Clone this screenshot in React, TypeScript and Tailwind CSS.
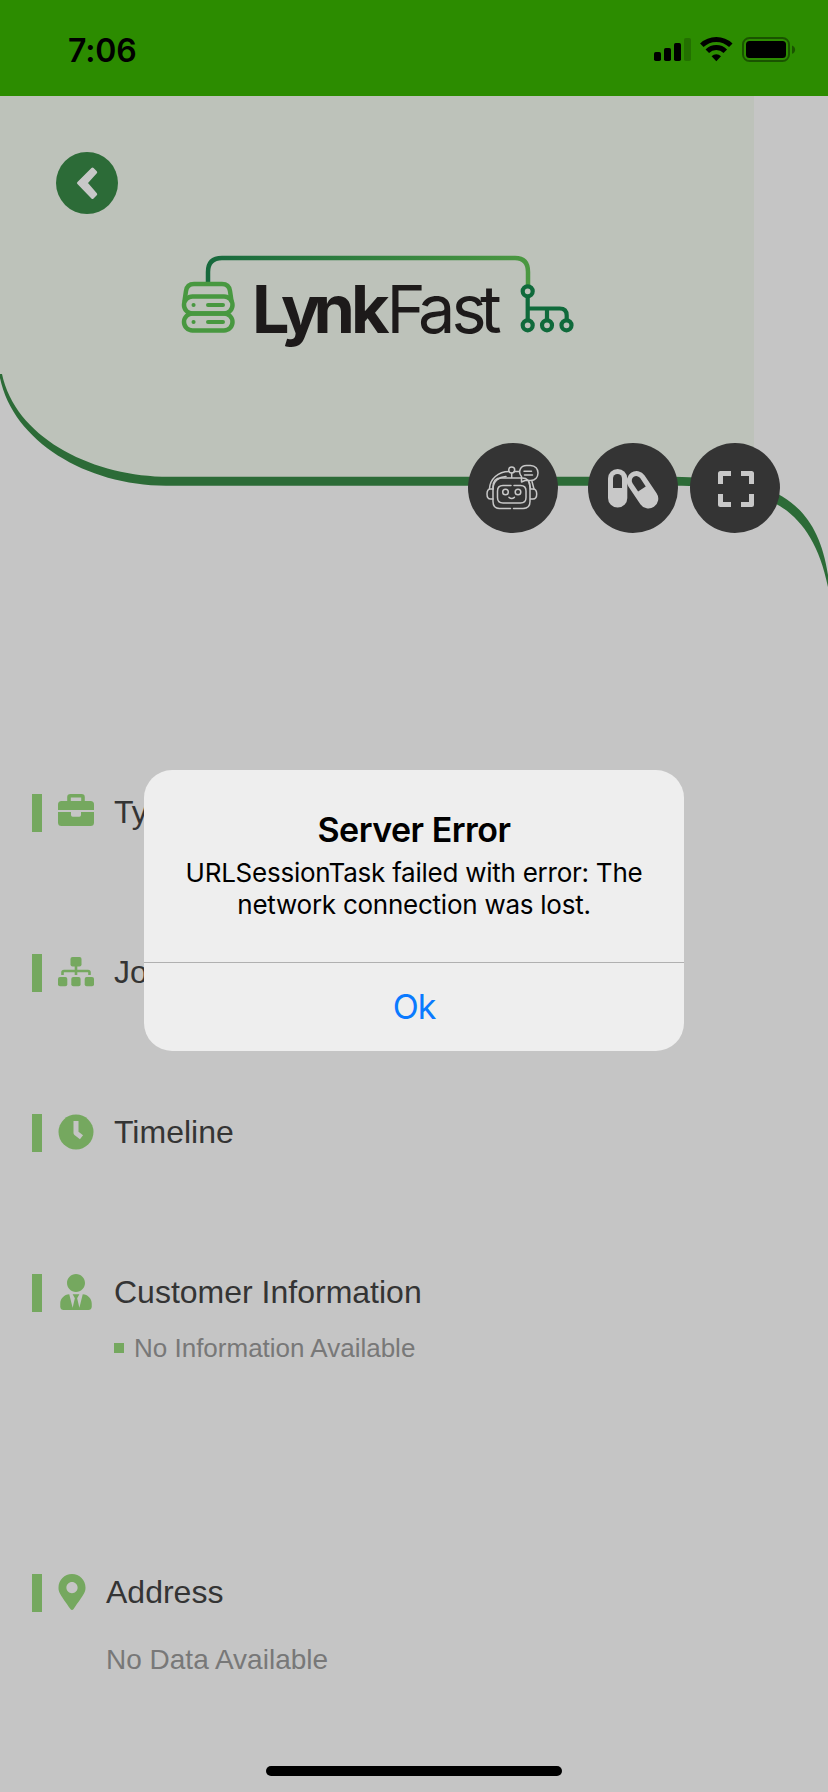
import type { ReactNode } from "react";
import { FaMapMarkerAlt, FaUserTie } from "react-icons/fa";

function StatusBar() {
    return (
        <div className="flex h-24 shrink-0 items-start justify-between bg-[#2c8c00] pt-[31px] pr-[32px] pl-[68px]">
            <span className="mt-px font-[Inter,sans-serif] text-[32px] leading-[38px] font-semibold tracking-[-0.1px] text-black">7:06</span>
            <svg width="144" height="30" viewBox="0 0 144 30" className="mt-[4px]">
                <rect x="2" y="17" width="7" height="9" rx="1.8" />
                <rect x="12" y="13" width="7" height="13" rx="1.8" />
                <rect x="22" y="8" width="7" height="18" rx="1.8" />
                <rect x="32" y="3" width="7" height="23" rx="1.8" opacity="0.2" />
                <g fill="none" stroke="#000" strokeWidth="5">
                    <path d="M49.8 10.2a21 21 0 0 1 29 0" />
                    <path d="M55.3 16.2a12.8 12.8 0 0 1 18 0" />
                </g>
                <path d="M59.6 21.2a6.8 6.8 0 0 1 9.4 0l-4.7 5z" />
                <rect x="91" y="3" width="46" height="23" rx="6.5" fill="none" stroke="#000" strokeOpacity="0.4" strokeWidth="2" />
                <rect x="94" y="6" width="40" height="17" rx="3.5" />
                <path d="M140 10.5c4.200 1.600 4.200 6.700 0 8.300z" opacity="0.4" />
            </svg>
        </div>
    );
}

function Logo() {
    return (
        <svg width="440" height="120" viewBox="160 240 440 120" className="absolute top-[144px] left-[160px]">
            <defs>
                <linearGradient id="wire" gradientUnits="userSpaceOnUse" x1="208" y1="0" x2="530" y2="0">
                    <stop offset="0" stopColor="#17693d" />
                    <stop offset="1" stopColor="#4b9841" />
                </linearGradient>
            </defs>
            <path d="M208 283v-11q0-14 14-14h293q13 0 13 14v13" fill="none" stroke="url(#wire)" strokeWidth="4.500" />
            <g fill="none" stroke="#489840" strokeWidth="4.500" strokeLinecap="round">
                <path d="M184.500 301l1.500-10q1-7 8-7h28q7 0 8 7l1.500 10" />
                <rect x="184" y="296.500" width="48.500" height="17" rx="8.500" />
                <rect x="184" y="313.500" width="48.500" height="17" rx="8.500" />
                <path d="M208 305h15M208 322h15M193.500 305h.1M193.500 322h.1" strokeWidth="4" />
            </g>
            <g fill="none" stroke="#0f6a3b" strokeWidth="4.200">
                <circle cx="527.700" cy="291.300" r="5" />
                <circle cx="527.700" cy="325.300" r="5" />
                <circle cx="547" cy="325.300" r="5" />
                <circle cx="566.500" cy="325.300" r="5" />
                <path d="M527.700 296v24M527.700 308.500h32q7 0 7 7v5M547 308.500v12" />
            </g>
            <text x="252 281 313.500 351 386.500 418 451.500 480" y="332.500" fontSize="66.500" fill="#1d1a1a" className="font-[Inter,sans-serif]">
                <tspan fontWeight="700">Lynk</tspan>
                <tspan fontWeight="400">Fast</tspan>
            </text>
        </svg>
    );
}

function RobotIcon() {
    return (
        <svg width="90" height="90" viewBox="0 0 90 90" fill="none" stroke="#c8c8c8" strokeWidth="1.500" strokeLinecap="round" strokeLinejoin="round">
            <path d="M42.500 65.500h-11q-6.500 0-6.500-7V44q0-9 8-9h21q8 0 8 9v14.500q0 7-7 7h-9.500" />
            <path d="M43 42.500H35q-5.500 0-5.500 5.500v6.500q0 5.500 5.500 5.500h17.500q5.500 0 5.500-5.500V48q0-5.500-5.500-5.500H46" />
            <circle cx="37.500" cy="49" r="2.800" />
            <circle cx="50" cy="49" r="2.800" />
            <path d="M41 54.300q2.700 2.200 5.400 0" />
            <path d="M25 46h-2.500q-3.500 0-3.500 5t3.500 5H25M62.500 46h2.500q3.700 0 3.700 5t-3.700 5h-2.500" />
            <path d="M21.500 45.500C22 36 30 28.500 41 28.500M25 46c0-8 6-12 13-12.500M46 28.500h5M61 39l1.500 6.500M64 38.500l2 7.500" />
            <circle cx="43.700" cy="27" r="3" />
            <path d="M43.700 30v4.500" />
            <path d="M53.500 39v-5.500c-4-5-1-11 5-11h4c10 0 10 15 0 15h-5.500z" />
            <path d="M56 28.300h7.500M56.500 32h8" />
        </svg>
    );
}

function PillsIcon() {
    return (
        <svg width="90" height="90" viewBox="0 0 90 90">
            <rect x="20" y="26" width="19.300" height="38.500" rx="9.600" fill="#c8c8c8" />
            <path d="M25 45v-9.500a4.500 4.500 0 0 1 9 0V45z" fill="#343434" />
            <g transform="translate(54.500 46.800) rotate(-34)">
                <rect x="-9.800" y="-20.500" width="19.600" height="41" rx="9.800" fill="#c8c8c8" />
                <path d="M-4.600 -1v-10a4.600 4.600 0 0 1 9.200 0v10z" fill="#343434" />
            </g>
        </svg>
    );
}

function ExpandIcon() {
    return (
        <svg width="90" height="90" viewBox="0 0 90 90" fill="none" stroke="#c8c8c8" strokeWidth="5" strokeLinejoin="round">
            <path d="M30.500 41V30.500H41M51 30.500h10.500V41M61.500 51v10.500H51M41 61.500H30.500V51" />
        </svg>
    );
}

function BriefcaseIcon() {
    return (
        <svg width="36" height="36" viewBox="0 0 36 36" fill="#75a85f">
            <path d="M11 8V3.500Q11 2 12.500 2h11Q25 2 25 3.500V8" fill="none" stroke="#75a85f" strokeWidth="3.600" transform="translate(0 -.2)" />
            <path d="M0 16v-5.500Q0 7 3.500 7h29Q36 7 36 10.500V16z" />
            <path d="M0 18h13v3q0 1.700 1.700 1.700h6.600q1.700 0 1.700-1.700v-3h13v10.500q0 3.500-3.500 3.500h-29Q0 32 0 28.500z" />
        </svg>
    );
}

function SitemapIcon() {
    return (
        <svg width="36" height="36" viewBox="0 0 36 36" fill="#75a85f">
            <rect x="12.500" y="3" width="11" height="9.500" rx="2" />
            <rect x="0" y="23" width="9.300" height="9.300" rx="2" />
            <rect x="13.300" y="23" width="9.300" height="9.300" rx="2" />
            <rect x="26.700" y="23" width="9.300" height="9.300" rx="2" />
            <path d="M18 12v9M4.500 21v-2.500q0-1.500 1.500-1.500h24q1.500 0 1.500 1.500V21" fill="none" stroke="#75a85f" strokeWidth="2.600" />
        </svg>
    );
}

function ClockIcon() {
    return (
        <svg width="36" height="36" viewBox="0 0 36 36">
            <circle cx="18" cy="18" r="17.500" fill="#75a85f" />
            <path d="M18 7V19l5.500 4.300" fill="none" stroke="#c5c5c5" strokeWidth="5" strokeLinejoin="round" />
        </svg>
    );
}

function Header() {
    return (
        <header className="relative h-[698px] shrink-0">
            <svg width="828" height="500" viewBox="0 96 828 500" className="absolute top-0 left-0">
                <path d="M0 96H754V480H166C86 483 14 438 0 374Z" fill="#bdc2ba" />
                <path d="M0 374H2C15 436 88 474.500 162 476.700H660C748 477 814 482 828 575V587C808 490 746 485.700 660 485.700H166C86 485.500 13 441 0 378Z" fill="#2c6b37" />
            </svg>
            <button className="absolute top-[56px] left-[56px] size-[62px] rounded-full bg-[#2c6b37]">
                <svg width="62" height="62" viewBox="0 0 62 62" fill="#c8c8c8" stroke="#c8c8c8" strokeWidth="3" strokeLinejoin="round">
                    <path d="M36.500 17L22.500 31l14 14.500 3.200-3.200L30 31l9.700-10.700z" />
                </svg>
            </button>
            <Logo />
            <div className="absolute top-[347px] left-[468px] flex">
                <button className="mr-[30px] size-[90px] rounded-full bg-[#343434]"><RobotIcon /></button>
                <button className="mr-3 size-[90px] rounded-full bg-[#343434]"><PillsIcon /></button>
                <button className="size-[90px] rounded-full bg-[#343434]"><ExpandIcon /></button>
            </div>
        </header>
    );
}

function Section({ icon, title, className, children }: { icon: ReactNode; title: string; className: string; children?: ReactNode }) {
    return (
        <section className={className}>
            <div className="flex h-[38px] items-start">
                <div className="mr-4 h-[38px] w-[10px] bg-[#75a85f]" />
                <div className="mr-5 text-[#75a85f]">{icon}</div>
                <h2 className="text-[32px] leading-[37px] text-[#343434]">{title}</h2>
            </div>
            {children}
        </section>
    );
}

function Alert() {
    return (
        <div className="absolute top-[770px] left-[144px] flex h-[281px] w-[540px] flex-col rounded-[28px] bg-[#eeeeee] text-center font-[Inter,sans-serif] text-black">
            <div className="h-[192px] pt-[40px]">
                <h1 className="text-[34px] leading-[40px] font-semibold tracking-[-0.5px]">Server Error</h1>
                <p className="mt-[7px] text-[26px] leading-8 tracking-[-0.25px]">
                    URLSessionTask failed with error: The
                    <br />
                    network connection was lost.
                </p>
            </div>
            <button className="flex-1 border-t border-[#b0b0b0] pb-px text-[34px] tracking-[-1px] text-[#0a7aff]">Ok</button>
        </div>
    );
}

export default function App() {
    return (
        <div className="relative flex h-[1792px] w-[828px] flex-col overflow-hidden bg-[#c5c5c5] font-['Liberation_Sans',Arial,sans-serif]">
            <StatusBar />
            <Header />
            <main className="flex flex-col pl-8">
                <Section className="h-40" title="Type" icon={<BriefcaseIcon />} />
                <Section className="h-40" title="Job" icon={<SitemapIcon />} />
                <Section className="h-40" title="Timeline" icon={<ClockIcon />} />
                <Section className="h-[300px]" title="Customer Information" icon={<FaUserTie size={36} />}>
                    <div className="mt-[21px] ml-[82px] flex items-center gap-[10px]">
                        <div className="size-[10px] bg-[#75a85f]" />
                        <p className="text-[26px] leading-[30px] text-[#787878]">No Information Available</p>
                    </div>
                </Section>
                <Section className="h-40" title="Address" icon={<FaMapMarkerAlt size={36} className="-mx-1" />}>
                    <p className="mt-[32px] ml-[74px] text-[28px] leading-8 text-[#787878]">No Data Available</p>
                </Section>
            </main>
            <Alert />
            <div className="absolute bottom-4 left-[266px] h-[10px] w-[296px] rounded-full bg-black" />
        </div>
    );
}
